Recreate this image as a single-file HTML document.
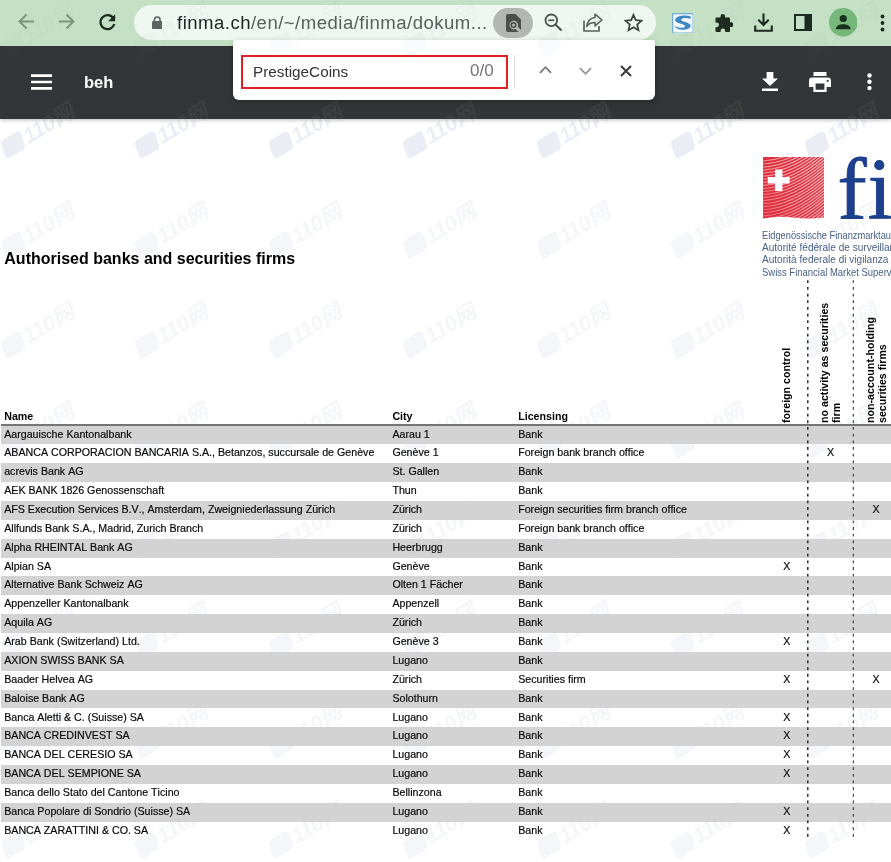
<!DOCTYPE html>
<html><head><meta charset="utf-8"><title>beh</title>
<style>
*{box-sizing:border-box;margin:0;padding:0}
html,body{width:891px;height:862px;overflow:hidden;background:#fff}
body{position:relative;font-family:"Liberation Sans","Noto Sans CJK SC",sans-serif;color:#111}
.abs{position:absolute}
#chrome{position:absolute;left:0;top:0;width:891px;height:46px;background:#c4e1c5}
#pill{position:absolute;left:134px;top:5px;width:522px;height:35px;border-radius:18px;background:#f0f6f0}
#url{position:absolute;left:177px;top:9.5px;font-size:17.6px;line-height:26px;color:#5a5f5c;white-space:nowrap;letter-spacing:.45px;transform-origin:0 50%;transform:scaleX(1.055)}
#url b{font-weight:400;color:#1f2421}
#chip{position:absolute;left:493px;top:7.5px;width:40px;height:30.5px;border-radius:16px;background:#b3b7b3}
#pdfbar{position:absolute;left:0;top:46px;width:891px;height:72.5px;background:#323639;box-shadow:0 1px 4px rgba(0,0,0,.28)}
#ttl{position:absolute;left:84px;top:70px;font-size:16.5px;line-height:22px;font-weight:700;color:#fff}
#find{position:absolute;left:233px;top:40px;width:422px;height:60px;background:#fff;border-radius:2px 2px 6px 6px;box-shadow:0 2px 6px rgba(0,0,0,.25)}
#inp{position:absolute;left:8px;top:15px;width:267px;height:34px;border:2px solid #dc2226}
#q{position:absolute;left:20px;top:20.5px;font-size:15.3px;line-height:22px;color:#333;white-space:nowrap}
#cnt{position:absolute;left:237px;top:19.5px;font-size:17px;line-height:22px;color:#757575;white-space:nowrap}
#sep{position:absolute;left:281px;top:15px;width:1px;height:34px;background:#dcdcdc}
#page{position:absolute;left:0;top:118px;width:891px;height:744px;overflow:hidden}
.row{font-kerning:none;position:absolute;left:1px;width:890px;height:18.86px;font-size:10.67px;line-height:17px;white-space:nowrap;color:#0a0a0a;-webkit-text-stroke:.18px #0a0a0a}
.row.g{background:#d3d3d3}
.row span{position:absolute;top:0}
.c1{left:3.2px}.c2{left:391.4px}.c3{left:517.2px}
.x1{left:782.3px}.x2{left:826px}.x3{left:871.5px}
#h1{position:absolute;left:4.3px;top:248.7px;font-size:16px;line-height:20px;font-weight:700;color:#000;white-space:nowrap}
.th{position:absolute;font-size:10.67px;line-height:12px;font-weight:700;color:#000;white-space:nowrap}
.vt{position:absolute;font-size:10.67px;line-height:12px;font-weight:700;color:#000;white-space:nowrap;transform-origin:0 0;transform:rotate(-90deg)}
#hline{position:absolute;left:1px;top:424.3px;width:890px;height:1.6px;background:#757575}
.dl{position:absolute;top:281px;width:1.5px;height:557px;background:repeating-linear-gradient(to bottom,#1a1a1a 0,#1a1a1a 2.7px,transparent 2.7px,transparent 5.57px)}
.lg{position:absolute;left:762.3px;font-size:10.2px;line-height:12.3px;color:#4a6088;white-space:nowrap;transform-origin:0 50%}
#fi{position:absolute;left:837.6px;top:133.8px;font-family:"Liberation Serif",serif;font-size:87.5px;line-height:110px;color:#1d3f8e;white-space:nowrap;letter-spacing:1px;-webkit-text-stroke:.9px #1d3f8e}
.wm{position:absolute;font-size:22px;line-height:28px;height:28px;font-weight:700;font-style:italic;color:#8aa0bd;opacity:.085;white-space:nowrap;transform:rotate(-31deg);transform-origin:50% 50%;width:92px;padding-left:26px;letter-spacing:-.5px}
.wm i{position:absolute;left:1px;top:4px;width:23px;height:19px;border-radius:4px;background:#8aa0bd;transform:skewX(-12deg)}
#wmtop{position:absolute;left:0;top:0;width:891px;height:862px;overflow:hidden;mix-blend-mode:exclusion;pointer-events:none}
#wmtop .wm{color:#15110b;opacity:1}
#wmtop .wm i{background:#15110b}
#wmtop .w0{opacity:.28}
</style></head><body>

<div id="page">
</div>

<div class="wm" style="left:-4.0px;top:214.0px"><i></i>110网</div>
<div class="wm" style="left:130.0px;top:214.0px"><i></i>110网</div>
<div class="wm" style="left:264.0px;top:214.0px"><i></i>110网</div>
<div class="wm" style="left:398.0px;top:214.0px"><i></i>110网</div>
<div class="wm" style="left:532.0px;top:214.0px"><i></i>110网</div>
<div class="wm" style="left:666.0px;top:214.0px"><i></i>110网</div>
<div class="wm" style="left:800.0px;top:214.0px"><i></i>110网</div>
<div class="wm" style="left:-4.0px;top:314.0px"><i></i>110网</div>
<div class="wm" style="left:130.0px;top:314.0px"><i></i>110网</div>
<div class="wm" style="left:264.0px;top:314.0px"><i></i>110网</div>
<div class="wm" style="left:398.0px;top:314.0px"><i></i>110网</div>
<div class="wm" style="left:532.0px;top:314.0px"><i></i>110网</div>
<div class="wm" style="left:666.0px;top:314.0px"><i></i>110网</div>
<div class="wm" style="left:800.0px;top:314.0px"><i></i>110网</div>
<div class="wm" style="left:-4.0px;top:414.0px"><i></i>110网</div>
<div class="wm" style="left:130.0px;top:414.0px"><i></i>110网</div>
<div class="wm" style="left:264.0px;top:414.0px"><i></i>110网</div>
<div class="wm" style="left:398.0px;top:414.0px"><i></i>110网</div>
<div class="wm" style="left:532.0px;top:414.0px"><i></i>110网</div>
<div class="wm" style="left:666.0px;top:414.0px"><i></i>110网</div>
<div class="wm" style="left:800.0px;top:414.0px"><i></i>110网</div>
<div class="wm" style="left:-4.0px;top:514.0px"><i></i>110网</div>
<div class="wm" style="left:130.0px;top:514.0px"><i></i>110网</div>
<div class="wm" style="left:264.0px;top:514.0px"><i></i>110网</div>
<div class="wm" style="left:398.0px;top:514.0px"><i></i>110网</div>
<div class="wm" style="left:532.0px;top:514.0px"><i></i>110网</div>
<div class="wm" style="left:666.0px;top:514.0px"><i></i>110网</div>
<div class="wm" style="left:800.0px;top:514.0px"><i></i>110网</div>
<div class="wm" style="left:-4.0px;top:614.0px"><i></i>110网</div>
<div class="wm" style="left:130.0px;top:614.0px"><i></i>110网</div>
<div class="wm" style="left:264.0px;top:614.0px"><i></i>110网</div>
<div class="wm" style="left:398.0px;top:614.0px"><i></i>110网</div>
<div class="wm" style="left:532.0px;top:614.0px"><i></i>110网</div>
<div class="wm" style="left:666.0px;top:614.0px"><i></i>110网</div>
<div class="wm" style="left:800.0px;top:614.0px"><i></i>110网</div>
<div class="wm" style="left:-4.0px;top:714.0px"><i></i>110网</div>
<div class="wm" style="left:130.0px;top:714.0px"><i></i>110网</div>
<div class="wm" style="left:264.0px;top:714.0px"><i></i>110网</div>
<div class="wm" style="left:398.0px;top:714.0px"><i></i>110网</div>
<div class="wm" style="left:532.0px;top:714.0px"><i></i>110网</div>
<div class="wm" style="left:666.0px;top:714.0px"><i></i>110网</div>
<div class="wm" style="left:800.0px;top:714.0px"><i></i>110网</div>
<div class="wm" style="left:-4.0px;top:814.0px"><i></i>110网</div>
<div class="wm" style="left:130.0px;top:814.0px"><i></i>110网</div>
<div class="wm" style="left:264.0px;top:814.0px"><i></i>110网</div>
<div class="wm" style="left:398.0px;top:814.0px"><i></i>110网</div>
<div class="wm" style="left:532.0px;top:814.0px"><i></i>110网</div>
<div class="wm" style="left:666.0px;top:814.0px"><i></i>110网</div>
<div class="wm" style="left:800.0px;top:814.0px"><i></i>110网</div>
<!-- PDF content (absolute in body coords) -->
<div id="h1">Authorised banks and securities firms</div>

<!-- logo -->
<svg class="abs" style="left:762.5px;top:157px" width="61.5" height="61.5" viewBox="0 0 61.5 61.5">
<defs><linearGradient id="fg" x1="0" y1="1" x2="1" y2="0"><stop offset="0" stop-color="#fff" stop-opacity=".18"/><stop offset=".45" stop-color="#fff" stop-opacity=".5"/><stop offset="1" stop-color="#fff" stop-opacity=".8"/></linearGradient>
<clipPath id="fc"><path d="M0 0h61.5v60.500Q45 62.500 30 60.500T0 61.500z"/></clipPath></defs>
<g clip-path="url(#fc)"><rect width="61.5" height="62" fill="#df2f3e"/>
<path d="M-1,4.0 Q30,3.0 63,-26.0 M-1,7.0 Q30,6.0 63,-22.9 M-1,10.1 Q30,9.1 63,-19.9 M-1,13.1 Q30,12.1 63,-16.9 M-1,16.2 Q30,15.2 63,-13.8 M-1,19.2 Q30,18.2 63,-10.8 M-1,22.3 Q30,21.3 63,-7.7 M-1,25.4 Q30,24.4 63,-4.6 M-1,28.4 Q30,27.4 63,-1.6 M-1,31.5 Q30,30.5 63,1.5 M-1,34.5 Q30,33.5 63,4.5 M-1,37.5 Q30,36.5 63,7.5 M-1,40.6 Q30,39.6 63,10.6 M-1,43.6 Q30,42.6 63,13.6 M-1,46.7 Q30,45.7 63,16.7 M-1,49.7 Q30,48.7 63,19.7 M-1,52.8 Q30,51.8 63,22.8 M-1,55.8 Q30,54.8 63,25.8 M-1,58.9 Q30,57.9 63,28.9 M-1,61.9 Q30,60.9 63,31.9 M-1,65.0 Q30,64.0 63,35.0 M-1,68.0 Q30,67.0 63,38.0 M-1,71.1 Q30,70.1 63,41.1 M-1,74.1 Q30,73.1 63,44.1 M-1,77.2 Q30,76.2 63,47.2 M-1,80.2 Q30,79.2 63,50.2 M-1,83.3 Q30,82.3 63,53.3 M-1,86.3 Q30,85.3 63,56.3 M-1,89.4 Q30,88.4 63,59.4 M-1,92.4 Q30,91.4 63,62.4 M-1,95.5 Q30,94.5 63,65.5 M-1,98.5 Q30,97.5 63,68.5" fill="none" stroke="url(#fg)" stroke-width="1.150"/></g>
<path d="M12.100 12.600h7.300v7.300h7.200v6.700h-7.200v7.300h-7.300v-7.300h-7.300v-6.700h7.300z" fill="#fff"/>
</svg>
<div id="fi">fin</div>
<div class="lg" style="top:229.6px;transform:scaleX(.911)">Eidgenössische Finanzmarktaufsicht FINMA</div>
<div class="lg" style="top:241.8px;transform:scaleX(.988)">Autorité fédérale de surveillance des marchés financiers FINMA</div>
<div class="lg" style="top:254px;transform:scaleX(.988)">Autorità federale di vigilanza sui mercati finanziari FINMA</div>
<div class="lg" style="top:266.5px;transform:scaleX(.93)">Swiss Financial Market Supervisory Authority FINMA</div>


<div class="vt" style="left:779.9px;top:423px">foreign control</div>
<div class="vt" style="left:817.7px;top:423px">no activity as securities<br>firm</div>
<div class="vt" style="left:863.8px;top:423px">non-account-holding<br>securities firms</div>

<div class="th" style="left:4.2px;top:410px">Name</div>
<div class="th" style="left:392.4px;top:410px">City</div>
<div class="th" style="left:518.2px;top:410px">Licensing</div>
<div id="hline"></div>
<div class="row g" style="top:425.60px"><span class="c1">Aargauische Kantonalbank</span><span class="c2">Aarau 1</span><span class="c3">Bank</span></div>
<div class="row" style="top:444.46px"><span class="c1">ABANCA CORPORACION BANCARIA S.A., Betanzos, succursale de Genève</span><span class="c2">Genève 1</span><span class="c3">Foreign bank branch office</span><span class="x2">X</span></div>
<div class="row g" style="top:463.32px"><span class="c1">acrevis Bank AG</span><span class="c2">St. Gallen</span><span class="c3">Bank</span></div>
<div class="row" style="top:482.18px"><span class="c1">AEK BANK 1826 Genossenschaft</span><span class="c2">Thun</span><span class="c3">Bank</span></div>
<div class="row g" style="top:501.04px"><span class="c1">AFS Execution Services B.V., Amsterdam, Zweigniederlassung Zürich</span><span class="c2">Zürich</span><span class="c3">Foreign securities firm branch office</span><span class="x3">X</span></div>
<div class="row" style="top:519.90px"><span class="c1">Allfunds Bank S.A., Madrid, Zurich Branch</span><span class="c2">Zürich</span><span class="c3">Foreign bank branch office</span></div>
<div class="row g" style="top:538.76px"><span class="c1">Alpha RHEINTAL Bank AG</span><span class="c2">Heerbrugg</span><span class="c3">Bank</span></div>
<div class="row" style="top:557.62px"><span class="c1">Alpian SA</span><span class="c2">Genève</span><span class="c3">Bank</span><span class="x1">X</span></div>
<div class="row g" style="top:576.48px"><span class="c1">Alternative Bank Schweiz AG</span><span class="c2">Olten 1 Fächer</span><span class="c3">Bank</span></div>
<div class="row" style="top:595.34px"><span class="c1">Appenzeller Kantonalbank</span><span class="c2">Appenzell</span><span class="c3">Bank</span></div>
<div class="row g" style="top:614.20px"><span class="c1">Aquila AG</span><span class="c2">Zürich</span><span class="c3">Bank</span></div>
<div class="row" style="top:633.06px"><span class="c1">Arab Bank (Switzerland) Ltd.</span><span class="c2">Genève 3</span><span class="c3">Bank</span><span class="x1">X</span></div>
<div class="row g" style="top:651.92px"><span class="c1">AXION SWISS BANK SA</span><span class="c2">Lugano</span><span class="c3">Bank</span></div>
<div class="row" style="top:670.78px"><span class="c1">Baader Helvea AG</span><span class="c2">Zürich</span><span class="c3">Securities firm</span><span class="x1">X</span><span class="x3">X</span></div>
<div class="row g" style="top:689.64px"><span class="c1">Baloise Bank AG</span><span class="c2">Solothurn</span><span class="c3">Bank</span></div>
<div class="row" style="top:708.50px"><span class="c1">Banca Aletti &amp; C. (Suisse) SA</span><span class="c2">Lugano</span><span class="c3">Bank</span><span class="x1">X</span></div>
<div class="row g" style="top:727.36px"><span class="c1">BANCA CREDINVEST SA</span><span class="c2">Lugano</span><span class="c3">Bank</span><span class="x1">X</span></div>
<div class="row" style="top:746.22px"><span class="c1">BANCA DEL CERESIO SA</span><span class="c2">Lugano</span><span class="c3">Bank</span><span class="x1">X</span></div>
<div class="row g" style="top:765.08px"><span class="c1">BANCA DEL SEMPIONE SA</span><span class="c2">Lugano</span><span class="c3">Bank</span><span class="x1">X</span></div>
<div class="row" style="top:783.94px"><span class="c1">Banca dello Stato del Cantone Ticino</span><span class="c2">Bellinzona</span><span class="c3">Bank</span></div>
<div class="row g" style="top:802.80px"><span class="c1">Banca Popolare di Sondrio (Suisse) SA</span><span class="c2">Lugano</span><span class="c3">Bank</span><span class="x1">X</span></div>
<div class="row" style="top:821.66px"><span class="c1">BANCA ZARATTINI &amp; CO. SA</span><span class="c2">Lugano</span><span class="c3">Bank</span><span class="x1">X</span></div>
<svg class="abs" style="left:800px;top:280px" width="60" height="560" viewBox="0 0 60 560"><path d="M7.800 .3V557.500" stroke="#141414" stroke-width="1.350" stroke-dasharray="2.800 3.870" fill="none"/><path d="M53.300 .3V557.500" stroke="#2a2a2a" stroke-width="1.050" stroke-dasharray="2.800 3.870" fill="none"/></svg>


<!-- PDF viewer toolbar -->
<div id="pdfbar">
<svg class="abs" style="left:31px;top:27.500px" width="21" height="16" viewBox="0 0 21 16"><path d="M0 0.300h21v2.600H0zM0 6.700h21v2.600H0zM0 13.100h21v2.600H0z" fill="#fff"/></svg>
<div class="abs" id="ttl" style="top:24.6px">beh</div>
<!-- download -->
<svg class="abs" style="left:761.500px;top:25.500px" width="16" height="19" viewBox="0 0 16 19"><path d="M4.600 0h6.800v6.500H16L8 14 0 6.500h4.600zM0 16.600h16V19H0z" fill="#fff"/></svg>
<!-- print -->
<svg class="abs" style="left:808.500px;top:25.500px" width="22" height="20" viewBox="0 0 22 20"><path d="M4.500 0h13v4h-13zM3.300 5.500h15.400A3.300 3.300 0 0 1 22 8.800V15h-4.400v5H4.400v-5H0V8.800A3.300 3.300 0 0 1 3.300 5.500zM6.600 11.600v6.200h8.800v-6.200zM18.700 7.700a1.100 1.100 0 1 0 .001 0z" fill="#fff" fill-rule="evenodd"/></svg>
<!-- dots -->
<svg class="abs" style="left:867px;top:27px" width="5" height="18" viewBox="0 0 5 18"><circle cx="2.500" cy="2.500" r="2.200" fill="#fff"/><circle cx="2.500" cy="8.800" r="2.200" fill="#fff"/><circle cx="2.500" cy="15.100" r="2.200" fill="#fff"/></svg>
</div>

<!-- Chrome toolbar -->
<div id="chrome">
<svg class="abs" style="left:18px;top:13.100px" width="17" height="17" viewBox="0 0 17 17"><path d="M16 8.500H2M8.500 1.500L1.500 8.500l7 7" fill="none" stroke="#76957a" stroke-width="1.900"/></svg>
<svg class="abs" style="left:58px;top:13.100px" width="17" height="17" viewBox="0 0 17 17"><path d="M1 8.500h14M8.500 1.500l7 7-7 7" fill="none" stroke="#76957a" stroke-width="1.900"/></svg>
<svg class="abs" style="left:97.500px;top:12.500px" width="19" height="19" viewBox="0 0 19 19"><path d="M15.300 5.200A7 7 0 1 0 16.300 11" fill="none" stroke="#1c2a1e" stroke-width="2.300"/><path d="M17.200 1.200v7h-7z" fill="#1c2a1e"/></svg>
<div id="pill"></div>
<!-- lock -->
<svg class="abs" style="left:151.500px;top:16.200px" width="10.500" height="13.200" viewBox="0 0 11 14.500" preserveAspectRatio="none"><rect x="0" y="5.500" width="11" height="9" rx="1.300" fill="#5d6360"/><path d="M2.600 6V3.900a2.900 2.900 0 0 1 5.800 0V6" fill="none" stroke="#5d6360" stroke-width="1.700"/></svg>
<div id="url"><b>finma.ch</b>/en/~/media/finma/dokum...</div>
<div id="chip"></div>
<!-- find in page icon -->
<svg class="abs" style="left:505.500px;top:14px" width="15" height="18" viewBox="0 0 15 18"><path d="M2 0h7.500L15 5.500V16l-3.200-3.200A4.300 4.300 0 1 0 9.500 15.100L12.400 18H2a2 2 0 0 1-2-2V2a2 2 0 0 1 2-2z" fill="#4a4f4c"/><circle cx="7.500" cy="11" r="2.300" fill="none" stroke="#4a4f4c" stroke-width="1.500"/></svg>
<!-- zoom out -->
<svg class="abs" style="left:544px;top:13px" width="19" height="19" viewBox="0 0 19 19"><circle cx="7.300" cy="7.300" r="5.800" fill="none" stroke="#4c524e" stroke-width="1.800"/><path d="M11.700 11.700l5.800 5.800" stroke="#4c524e" stroke-width="2.100"/><path d="M4.300 7.300h6" stroke="#4c524e" stroke-width="1.700"/></svg>
<!-- share -->
<svg class="abs" style="left:583px;top:13px" width="20" height="19" viewBox="0 0 20 19"><path d="M1 7.500V18h15v-5" fill="none" stroke="#5b615d" stroke-width="1.700"/><path d="M12 1.200l7 5.800-7 5.800V9.500c-4 0-6.500 1.200-8.300 4C4.300 8.800 7 5.200 12 4.500z" fill="none" stroke="#5b615d" stroke-width="1.600" stroke-linejoin="round"/></svg>
<!-- star -->
<svg class="abs" style="left:623.500px;top:12.500px" width="19" height="19" viewBox="0 0 19 19"><path d="M9.500 1.800l2.300 5.400 5.800.5-4.400 3.800 1.300 5.700-5-3-5 3 1.300-5.700L1.400 7.700l5.800-.5z" fill="none" stroke="#3d423f" stroke-width="1.700" stroke-linejoin="miter"/></svg>
<!-- S ext -->
<svg class="abs" style="left:672px;top:13px" width="21" height="20" viewBox="0 0 21 20"><rect width="21" height="20" fill="#78aed8"/><rect x="1.300" y="1.300" width="19.200" height="18.200" fill="#f2f7fb"/><path d="M18.500 3.200C13 1.800 4.500 2.200 3.200 6.800 2.200 10.500 13.500 10.800 13 13.200 12.500 15.500 6 15.200 2.500 13c1.500 4.300 13.500 5.500 16 .8C20.500 9.500 9 9 9.200 6.800 9.500 4.500 15 4.500 18.500 6z" fill="#3f86c4"/></svg>
<!-- puzzle -->
<svg class="abs" style="left:712.500px;top:13px" width="20" height="20" viewBox="0 0 20 20"><path d="M7.500 3.200a2.300 2.300 0 0 1 4.600 0V4.500H16a1 1 0 0 1 1 1V9.200h1a2.400 2.400 0 0 1 0 4.800h-1V18a1 1 0 0 1-1 1h-3.800v-1.300a2.300 2.300 0 0 0-4.600 0V19H3.500a1 1 0 0 1-1-1V14.200H3.600a2.400 2.400 0 0 0 0-4.800H2.500V5.500a1 1 0 0 1 1-1h4z" fill="#1d2a1f"/></svg>
<!-- download -->
<svg class="abs" style="left:753.500px;top:12.500px" width="19" height="19" viewBox="0 0 19 19"><path d="M9.500 0.500v11M4.300 6.800l5.200 5.200 5.200-5.200" fill="none" stroke="#1d2a1f" stroke-width="2.100"/><path d="M1.200 12.500V17.800h16.600V12.500" fill="none" stroke="#1d2a1f" stroke-width="2.100"/></svg>
<!-- side panel -->
<svg class="abs" style="left:794px;top:14px" width="18" height="17" viewBox="0 0 18 17"><rect x="1" y="1" width="16" height="15" fill="none" stroke="#1d2a1f" stroke-width="2"/><rect x="10.500" y="1" width="6.500" height="15" fill="#1d2a1f"/></svg>
<!-- avatar -->
<svg class="abs" style="left:828.500px;top:8px" width="28.500" height="28.500" viewBox="0 0 28.500 28.500"><circle cx="14.250" cy="14.250" r="14.250" fill="#76b87b"/><circle cx="14.250" cy="10.500" r="3.600" fill="#16301a"/><path d="M6.800 21.300c0-3.700 4.500-5 7.450-5s7.450 1.300 7.450 5z" fill="#16301a"/></svg>
<!-- dots -->
<svg class="abs" style="left:880px;top:13.500px" width="5" height="18" viewBox="0 0 5 18"><circle cx="2.500" cy="2.500" r="1.900" fill="#1d2a1f"/><circle cx="2.500" cy="9" r="1.900" fill="#1d2a1f"/><circle cx="2.500" cy="15.500" r="1.900" fill="#1d2a1f"/></svg>
</div>

<!-- Find bar -->
<div id="find">
<div id="inp"></div>
<div id="q">PrestigeCoins</div>
<div id="cnt">0/0</div>
<div id="sep"></div>
<svg class="abs" style="left:305.500px;top:25px" width="13" height="9" viewBox="0 0 13 9"><path d="M1 7.800l5.500-5.600L12 7.800" fill="none" stroke="#787878" stroke-width="1.800"/></svg>
<svg class="abs" style="left:346px;top:26.500px" width="13" height="9" viewBox="0 0 13 9"><path d="M1 1.200l5.500 5.600L12 1.200" fill="none" stroke="#939393" stroke-width="1.800"/></svg>
<svg class="abs" style="left:386.500px;top:24.500px" width="12" height="12" viewBox="0 0 12 12"><path d="M1 1l10 10M11 1L1 11" fill="none" stroke="#3c3c3c" stroke-width="2.100"/></svg>
</div>

<div id="wmtop">
<div class="wm w0" style="left:-4.0px;top:14.0px"><i></i>110网</div>
<div class="wm w0" style="left:130.0px;top:14.0px"><i></i>110网</div>
<div class="wm w0" style="left:264.0px;top:14.0px"><i></i>110网</div>
<div class="wm w0" style="left:398.0px;top:14.0px"><i></i>110网</div>
<div class="wm w0" style="left:532.0px;top:14.0px"><i></i>110网</div>
<div class="wm w0" style="left:666.0px;top:14.0px"><i></i>110网</div>
<div class="wm w0" style="left:800.0px;top:14.0px"><i></i>110网</div>
<div class="wm" style="left:-4.0px;top:114.0px"><i></i>110网</div>
<div class="wm" style="left:130.0px;top:114.0px"><i></i>110网</div>
<div class="wm" style="left:264.0px;top:114.0px"><i></i>110网</div>
<div class="wm" style="left:398.0px;top:114.0px"><i></i>110网</div>
<div class="wm" style="left:532.0px;top:114.0px"><i></i>110网</div>
<div class="wm" style="left:666.0px;top:114.0px"><i></i>110网</div>
<div class="wm" style="left:800.0px;top:114.0px"><i></i>110网</div>
</div>
</body></html>
